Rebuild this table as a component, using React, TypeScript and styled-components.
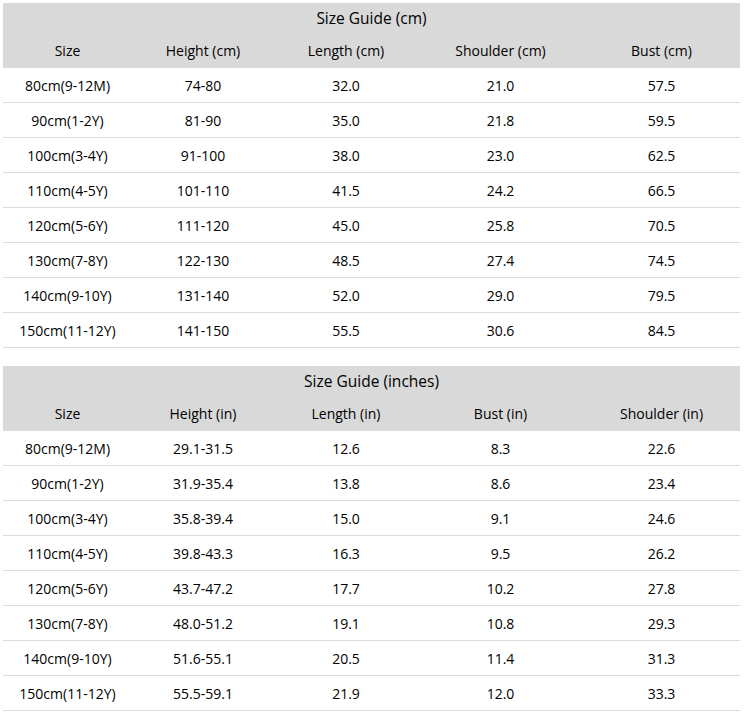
import React from "react";
import styled, { createGlobalStyle } from "styled-components";

const Global = createGlobalStyle`
  html, body { margin: 0; padding: 0; background: #fff; }
  body { font-family: "Open Sans", "Noto Sans", sans-serif; color: #000; }
`;

const Page = styled.div`
  padding: 3px 10px 0 3px;
  display: flex;
  flex-direction: column;
  gap: 18px;
`;

const Table = styled.table`
  width: 737px;
  border-collapse: collapse;
  table-layout: fixed;
  font-size: 14px;
`;

const Head = styled.thead`
  background: #d9d9d9;
`;

const TitleCell = styled.th`
  height: 30px;
  padding: 0;
  font-weight: 400;
  font-size: 15.5px;
  text-align: center;
  vertical-align: middle;
`;

const HeadCell = styled.th`
  height: 35px;
  padding: 0;
  font-weight: 400;
  text-align: center;
  vertical-align: middle;
`;

const Row = styled.tr`
  border-bottom: 1px solid #dcdcdc;
`;

const Cell = styled.td`
  height: 34px;
  padding: 0;
  text-align: center;
  vertical-align: middle;
`;

const widths = [129, 142, 144, 165, 157];

type Props = { title: string; headers: string[]; rows: string[][] };

const SizeTable: React.FC<Props> = ({ title, headers, rows }) => (
  <Table>
    <colgroup>
      {widths.map((w, i) => (
        <col key={i} style={{ width: w }} />
      ))}
    </colgroup>
    <Head>
      <tr>
        <TitleCell colSpan={5}>{title}</TitleCell>
      </tr>
      <tr>
        {headers.map((h) => (
          <HeadCell key={h}>{h}</HeadCell>
        ))}
      </tr>
    </Head>
    <tbody>
      {rows.map((r, i) => (
        <Row key={i}>
          {r.map((c, j) => (
            <Cell key={j}>{c}</Cell>
          ))}
        </Row>
      ))}
    </tbody>
  </Table>
);

const sizes = [
  "80cm(9-12M)",
  "90cm(1-2Y)",
  "100cm(3-4Y)",
  "110cm(4-5Y)",
  "120cm(5-6Y)",
  "130cm(7-8Y)",
  "140cm(9-10Y)",
  "150cm(11-12Y)",
];

const cmData = [
  ["74-80", "32.0", "21.0", "57.5"],
  ["81-90", "35.0", "21.8", "59.5"],
  ["91-100", "38.0", "23.0", "62.5"],
  ["101-110", "41.5", "24.2", "66.5"],
  ["111-120", "45.0", "25.8", "70.5"],
  ["122-130", "48.5", "27.4", "74.5"],
  ["131-140", "52.0", "29.0", "79.5"],
  ["141-150", "55.5", "30.6", "84.5"],
];

const inData = [
  ["29.1-31.5", "12.6", "8.3", "22.6"],
  ["31.9-35.4", "13.8", "8.6", "23.4"],
  ["35.8-39.4", "15.0", "9.1", "24.6"],
  ["39.8-43.3", "16.3", "9.5", "26.2"],
  ["43.7-47.2", "17.7", "10.2", "27.8"],
  ["48.0-51.2", "19.1", "10.8", "29.3"],
  ["51.6-55.1", "20.5", "11.4", "31.3"],
  ["55.5-59.1", "21.9", "12.0", "33.3"],
];

export default function App() {
  return (
    <>
      <Global />
      <Page>
        <SizeTable
          title="Size Guide (cm)"
          headers={["Size", "Height (cm)", "Length (cm)", "Shoulder (cm)", "Bust (cm)"]}
          rows={cmData.map((r, i) => [sizes[i], ...r])}
        />
        <SizeTable
          title="Size Guide (inches)"
          headers={["Size", "Height (in)", "Length (in)", "Bust (in)", "Shoulder (in)"]}
          rows={inData.map((r, i) => [sizes[i], ...r])}
        />
      </Page>
    </>
  );
}
